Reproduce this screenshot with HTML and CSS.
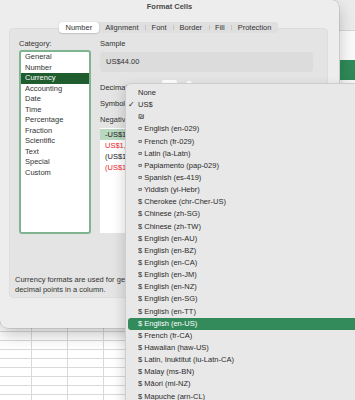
FILE: index.html
```html
<!DOCTYPE html>
<html lang="en">
<head>
  <meta charset="UTF-8">
  <meta name="viewport" content="width=device-width, initial-scale=1.0">
  <title>Format Cells</title>
  <link rel="stylesheet" href="styles.css">
</head>
<body>

<div class="sheet">
  <div class="ribbon"></div>
  <div class="toolbar">
    <div class="toolbar-tab"></div>
  </div>
  <div class="grid"></div>
</div>

<div class="dialog">
  <div class="dialog-title">Format Cells</div>

  <div class="tabs">
    <div class="segmented">
      <span class="tab active">Number</span>
      <span class="tab">Alignment</span>
      <span class="tab">Font</span>
      <span class="tab">Border</span>
      <span class="tab">Fill</span>
      <span class="tab">Protection</span>
    </div>
  </div>

  <div class="panel">
    <div class="panel-body">
      <div class="col-category">
        <div class="label">Category:</div>
        <ul class="category-list">
          <li>General</li>
          <li>Number</li>
          <li class="selected">Currency</li>
          <li>Accounting</li>
          <li>Date</li>
          <li>Time</li>
          <li>Percentage</li>
          <li>Fraction</li>
          <li>Scientific</li>
          <li>Text</li>
          <li>Special</li>
          <li>Custom</li>
        </ul>
      </div>

      <div class="col-options">
        <div class="label">Sample</div>
        <div class="sample">US$44.00</div>
        <div class="field-row decimals">
          <span>Decimal places:</span>
          <span class="num-input">2</span>
          <span class="stepper"></span>
        </div>
        <div class="field-row">
          <span>Symbol:</span>
        </div>
        <div class="label negative-label">Negative numbers:</div>
        <ul class="negative-list">
          <li class="selected">-US$1,234.10</li>
          <li class="red">US$1,234.10</li>
          <li>(US$1,234.10)</li>
          <li class="red">(US$1,234.10)</li>
        </ul>
      </div>
    </div>

    <p class="desc">Currency formats are used for general monetary values. Use Accounting formats to align<br>decimal points in a column.</p>
  </div>
</div>

<ul class="menu">
  <li><span class="check"></span>None</li>
  <li><span class="check">✓</span>US$</li>
  <li><span class="check"></span>₪</li>
  <li><span class="check"></span>¤ English (en-029)</li>
  <li><span class="check"></span>¤ French (fr-029)</li>
  <li><span class="check"></span>¤ Latin (la-Latn)</li>
  <li><span class="check"></span>¤ Papiamento (pap-029)</li>
  <li><span class="check"></span>¤ Spanish (es-419)</li>
  <li><span class="check"></span>¤ Yiddish (yi-Hebr)</li>
  <li><span class="check"></span>$ Cherokee (chr-Cher-US)</li>
  <li><span class="check"></span>$ Chinese (zh-SG)</li>
  <li><span class="check"></span>$ Chinese (zh-TW)</li>
  <li><span class="check"></span>$ English (en-AU)</li>
  <li><span class="check"></span>$ English (en-BZ)</li>
  <li><span class="check"></span>$ English (en-CA)</li>
  <li><span class="check"></span>$ English (en-JM)</li>
  <li><span class="check"></span>$ English (en-NZ)</li>
  <li><span class="check"></span>$ English (en-SG)</li>
  <li><span class="check"></span>$ English (en-TT)</li>
  <li class="highlight"><span class="check"></span>$ English (en-US)</li>
  <li><span class="check"></span>$ French (fr-CA)</li>
  <li><span class="check"></span>$ Hawaiian (haw-US)</li>
  <li><span class="check"></span>$ Latin, Inuktitut (iu-Latn-CA)</li>
  <li><span class="check"></span>$ Malay (ms-BN)</li>
  <li><span class="check"></span>$ Māori (mi-NZ)</li>
  <li><span class="check"></span>$ Mapuche (arn-CL)</li>
</ul>

</body>
</html>
```

FILE: styles.css
```css
body {
  margin: 0;
  width: 355px;
  height: 400px;
  overflow: hidden;
  position: relative;
  font-family: "Liberation Sans", Arial, sans-serif;
  font-size: 7.5px;
  color: #2b2b2b;
  background: #fff;
}

/* spreadsheet behind the dialog */
.sheet {
  display: flex;
  flex-direction: column;
  height: 400px;
}
.ribbon {
  height: 30px;
  background: #ebebeb;
  border-bottom: 1px solid #d6d6d6;
}
.toolbar {
  height: 52px;
  background: #fafafa;
  display: flex;
  flex-direction: column;
  justify-content: flex-end;
  padding-bottom: 3px;
  box-sizing: border-box;
}
.toolbar-tab {
  height: 20px;
  margin-left: 340px;
  background: #2f8a58;
}
.grid {
  flex: 1;
  background-color: #fff;
  background-image:
    linear-gradient(to right, #d9d9d9 1px, transparent 1px),
    linear-gradient(to bottom, #d9d9d9 1px, transparent 1px);
  background-size: 36px 9px;
  background-position: 31px 0, 0 5px;
}

/* dialog window */
.dialog {
  position: absolute;
  top: 0;
  left: 0;
  width: 339px;
  height: 328px;
  background: #ededed;
  border-radius: 0 7px 8px 8px;
  box-shadow: 0 7px 16px rgba(0, 0, 0, 0.22), 0 0 0 0.5px rgba(0, 0, 0, 0.18);
  display: flex;
  flex-direction: column;
}
.dialog-title {
  height: 14px;
  line-height: 14px;
  text-align: center;
  font-weight: bold;
  color: #4a4a4a;
}
.tabs {
  display: flex;
  justify-content: center;
  margin: 8px 11px 0 9px;
  position: relative;
  z-index: 1;
}
.segmented {
  display: flex;
  align-items: center;
  height: 11px;
  background: #dfdfdf;
  border-radius: 3px;
}
.tab {
  padding: 0 6.5px;
  line-height: 11px;
  color: #333;
  position: relative;
}
.tab + .tab::before {
  content: '';
  position: absolute;
  left: 0;
  top: 3px;
  height: 5px;
  border-left: 1px solid #c6c6c6;
}
.tab.active {
  background: #fff;
  border-radius: 3px;
  box-shadow: 0 0.5px 1.5px rgba(0, 0, 0, 0.25);
}
.tab.active + .tab::before {
  display: none;
}
.panel {
  margin: -5px 11px 0 9px;
  height: 270px;
  background: #e4e4e4;
  border-radius: 5px;
  box-shadow: inset 0 0 0 0.5px rgba(0, 0, 0, 0.06);
  display: flex;
  flex-direction: column;
}
.panel-body {
  display: flex;
  gap: 9px;
  padding: 10px 15px 0 10px;
}
.label {
  line-height: 11px;
  color: #333;
}

.col-category {
  width: 72px;
}
.category-list {
  list-style: none;
  margin: 1px 0 0;
  padding: 0;
  height: 184px;
  box-sizing: border-box;
  background: #fff;
  border: 2px solid #80b38f;
  border-radius: 3px;
}
.category-list li {
  line-height: 10.5px;
  padding-left: 4px;
  color: #333;
}
.category-list li.selected {
  background: #1f5c2e;
  color: #fff;
}

.col-options {
  flex: 1;
}
.sample {
  margin-top: 3px;
  height: 20px;
  line-height: 20px;
  padding-left: 6px;
  background: #dcdcdc;
  border-radius: 4px;
  color: #333;
}
.field-row {
  display: flex;
  align-items: center;
  gap: 6px;
  height: 16px;
}
.field-row.decimals {
  margin-top: 7px;
}
.num-input {
  width: 15px;
  height: 14px;
  line-height: 14px;
  background: #fff;
  border-radius: 2px;
  text-align: right;
  padding-right: 2px;
  box-sizing: border-box;
  margin-left: 3px;
}
.stepper {
  width: 6px;
  height: 12px;
  border-radius: 3px;
  background: #fff;
  margin-left: 3px;
}
.negative-label {
  margin-top: 3px;
}
.negative-list {
  list-style: none;
  margin: 3px 0 0;
  padding: 1px 0 0;
  height: 105px;
  box-sizing: border-box;
  background: #fff;
}
.negative-list li {
  line-height: 11px;
  padding-left: 5px;
  color: #222;
}
.negative-list li.selected {
  background: #b9d8c0;
}
.negative-list li.red {
  color: #f0262b;
}

.desc {
  margin: auto 0 3px;
  padding: 0 6px;
  line-height: 9.8px;
  white-space: nowrap;
  overflow: hidden;
  color: #333;
}

/* currency symbol popup menu */
.menu {
  position: absolute;
  top: 83px;
  left: 125px;
  width: 240px;
  margin: 0;
  padding: 3px 0 0;
  list-style: none;
  background: #e8e8e8;
  border: 1px solid #cdcdcd;
  border-radius: 6px 0 0 0;
  box-shadow: -2px 4px 12px rgba(0, 0, 0, 0.15);
}
.menu li {
  display: flex;
  height: 12.15px;
  line-height: 12.15px;
  margin: 0 3px 0 2px;
  border-radius: 3px;
  color: #2a2a2a;
  white-space: nowrap;
}
.menu .check {
  width: 10px;
  flex: none;
}
.menu li.highlight {
  background: #338b5c;
  color: #fff;
}
```
